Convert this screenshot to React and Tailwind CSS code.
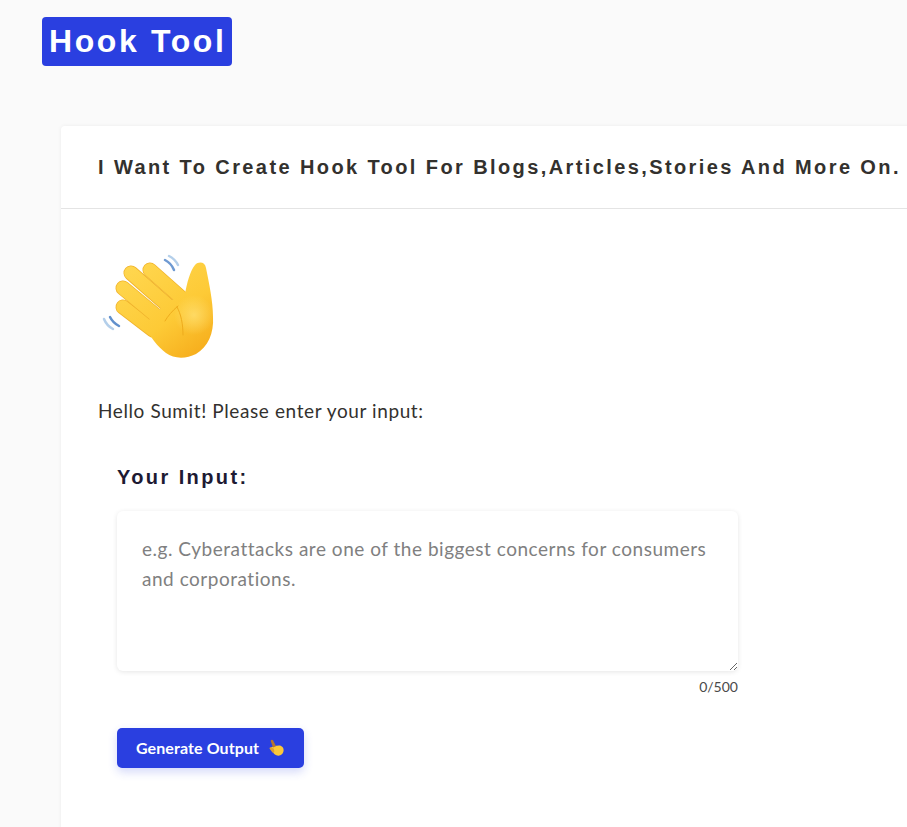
import React, { useState } from "react";

const bodyFont = "font-['Lato','Noto_Sans',sans-serif]";
const headFont = "font-['Liberation_Sans',Arial,sans-serif]";

const fingers = [
  "M33 66l30 23",
  "M33 47l42 35",
  "M41 32l41 36",
  "M60 29l35 31",
];

const palm =
  "M54 84L76 62l19-9C97 42 100 30 105 24C109 20 115 21 116 27C119 42 123 60 123 76C124 92 118 106 106 113C96 118 84 118 76 112C68 106 60 96 54 84z";

function WaveHand() {
  return (
    <svg viewBox="0 0 140 130" className="w-[140px] h-[130px]">
      <defs>
        <linearGradient id="skin" gradientUnits="userSpaceOnUse" x1="35" y1="25" x2="105" y2="118">
          <stop offset="0" stopColor="#ffd750" />
          <stop offset="0.6" stopColor="#fdca36" />
          <stop offset="1" stopColor="#f6ad1c" />
        </linearGradient>
        <radialGradient id="glow" gradientUnits="userSpaceOnUse" cx="104" cy="74" r="20">
          <stop offset="0" stopColor="#ffdf70" stopOpacity="0.8" />
          <stop offset="1" stopColor="#ffdf70" stopOpacity="0" />
        </radialGradient>
      </defs>
      <g fill="none" strokeWidth="2.5" strokeLinecap="round">
        <path d="M75 19c4 2 7 5 9 10" stroke="#6f9ad2" />
        <path d="M79 15c4 2 7 5 9 9" stroke="#b4cfea" />
        <path d="M14 78c2 5 5 8 9 10" stroke="#b4cfea" />
        <path d="M20 76c2 4 5 7 9 9" stroke="#6190cc" />
      </g>
      <g fill="none" strokeLinecap="round">
        {fingers.map((d) => (
          <g key={d}>
            <path d={d} stroke="#f0b32c" strokeWidth="15" />
            <path d={d} stroke="url(#skin)" strokeWidth="13.5" />
          </g>
        ))}
      </g>
      <path d={palm} fill="url(#skin)" />
      <path d={palm} fill="url(#glow)" />
      <path d="M75 80c3-5 7-10 13-15M87 66c4 7 6 17 6 28" fill="none" stroke="#eeab1c" strokeWidth="1" strokeLinecap="round" />
    </svg>
  );
}

function PointHand() {
  return (
    <svg viewBox="0 0 18 18" className="w-[18px] h-[18px] ml-[8px]">
      <path d="M4 8.5L7 7l5-.5c3 0 4.8 2.4 4.6 5-.2 3-2.6 5.3-5.4 5.2-2.6 0-4.4-1.6-5.2-3.6z" fill="#fcc83a" />
      <path d="M2.8 10c-.7-1 .2-2.2 1.4-1.7l2.6 1.5.6 3-1.8 1z" fill="#e0a030" />
      <path d="M3.8 2.2c-.5-1.2 1.2-2.2 2.2-1l3 6-3 1.4z" fill="#b5752f" />
    </svg>
  );
}

export default function App() {
  const [input, setInput] = useState("");

  return (
    <div className={`h-[827px] overflow-hidden bg-[#fafafa] ${bodyFont}`}>
      <div className="pt-[17px] pl-[42px]">
        <div className={`inline-block rounded-[4px] bg-[#2a3fe0] pl-[7px] pr-[5.5px] h-[49px] leading-[49px] text-[32px] font-bold tracking-[2.6px] text-white ${headFont}`}>
          Hook Tool
        </div>
      </div>

      <div className="mt-[60px] ml-[61px] w-[900px] rounded-t-[4px] bg-white shadow-[0_0_4px_rgba(0,0,0,0.06)]">
        <div className="h-[83px] border-b border-[#e4e4e4] pl-[37px] flex items-center">
          <h1 className={`whitespace-nowrap text-[20px] font-bold tracking-[2.4px] text-[#33312e] ${headFont}`}>
            I Want To Create Hook Tool For Blogs,Articles,Stories And More On.
          </h1>
        </div>

        <div className="pl-[37px] pb-[120px]">
          <div className="pt-[32px] -ml-[8px] -mb-[4px]">
            <WaveHand />
          </div>
          <p className="mt-[30px] text-[19px] tracking-[0.6px] leading-[27px] text-[#33312e]">
            Hello Sumit! Please enter your input:
          </p>

          <div className="ml-[19px] w-[621px]">
            <label className={`block mt-[40px] text-[20px] leading-[27px] font-bold tracking-[2.4px] text-[#1d1a33] ${headFont}`}>
              Your Input:
            </label>
            <textarea
              value={input}
              onChange={(e) => setInput(e.target.value)}
              maxLength={500}
              placeholder="e.g. Cyberattacks are one of the biggest concerns for consumers and corporations."
              className="mt-[20px] block w-full h-[160px] rounded-[6px] bg-white pl-[25px] pr-[20px] py-[23px] text-[19px] tracking-[0.52px] leading-[30px] text-[#33312e] placeholder:text-[#808080] outline-none shadow-[0_1px_5px_rgba(0,0,0,0.1)]"
            />
            <div className="mt-[7px] text-right text-[14px] leading-[18px] text-[#4a4a4a]">
              {input.length}/500
            </div>
            <button className="mt-[32px] flex items-center justify-center w-[187px] h-[40px] rounded-[5px] bg-[#2a3fe0] text-[16px] font-bold tracking-[0.1px] text-white shadow-[0_4px_10px_rgba(42,63,224,0.2)]">
              Generate Output
              <PointHand />
            </button>
          </div>
        </div>
      </div>
    </div>
  );
}
